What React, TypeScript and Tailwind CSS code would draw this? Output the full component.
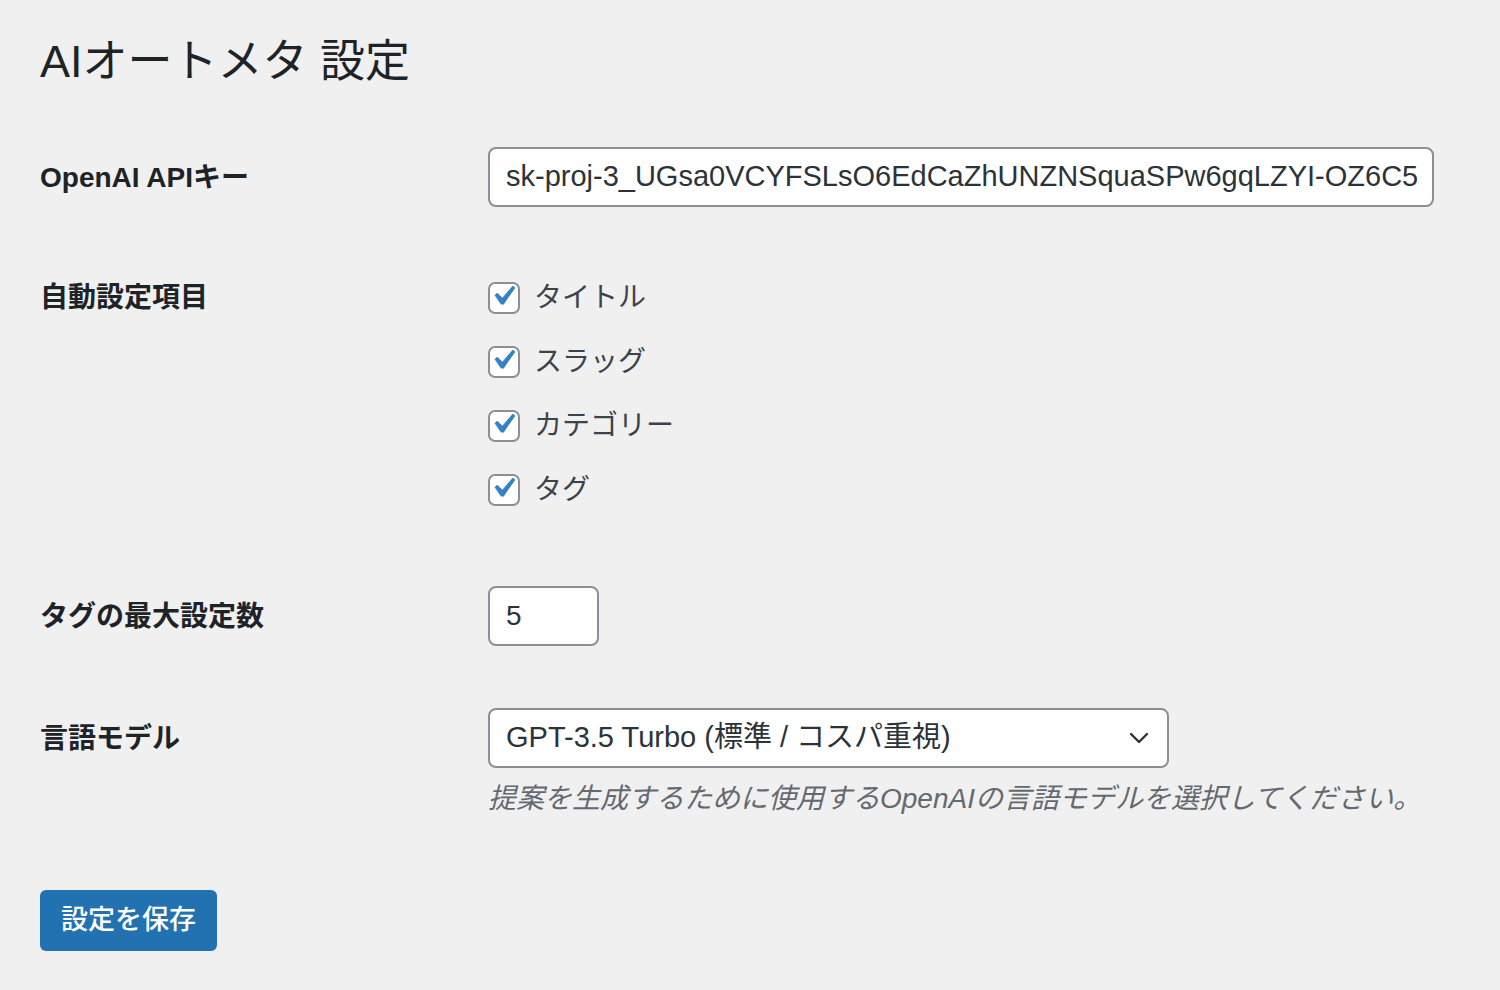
import { ChevronDown } from 'lucide-react'

// ── Settings page (WordPress admin style, 2x) ───────────────

const FONT = '"Liberation Sans", "Noto Sans CJK JP", sans-serif'

const fields = ['タイトル', 'スラッグ', 'カテゴリー', 'タグ']

export default function App() {
  return (
    <div
      className="min-h-[990px] w-full bg-[#f0f0f1] text-[#3c434a] pl-[40px] pr-[66px]"
      style={{ fontFamily: FONT }}
    >
      <h1 className="pt-[32px] h-[92px] text-[45px] leading-[60px] font-normal text-[#1d2327]">
        AIオートメタ 設定
      </h1>

      <div className="mt-[25px] flex flex-col">
        {/* ── API key ─────────────────────────── */}
        <Row label="OpenAI APIキー">
          <div className="h-[60px] w-[946px] rounded-[8px] border-2 border-[#8c8f94] bg-white px-[16px] flex items-center text-[29px] text-[#2c3338] whitespace-nowrap overflow-hidden">
            sk-proj-3_UGsa0VCYFSLsO6EdCaZhUNZNSquaSPw6gqLZYI-OZ6C5
          </div>
        </Row>

        {/* ── Checkboxes ──────────────────────── */}
        <Row label="自動設定項目" tall>
          <div className="flex flex-col gap-[28px] pt-[13px]">
            {fields.map(f => (
              <label key={f} className="flex items-center gap-[14px] h-[36px]">
                <Checkbox />
                <span className="text-[28px] text-[#3c434a]">{f}</span>
              </label>
            ))}
          </div>
        </Row>

        {/* ── Max tags ────────────────────────── */}
        <Row label="タグの最大設定数">
          <div className="h-[60px] w-[111px] rounded-[8px] border-2 border-[#8c8f94] bg-white px-[16px] flex items-center text-[28px] text-[#2c3338]">
            5
          </div>
        </Row>

        {/* ── Model ───────────────────────────── */}
        <div className="mt-[2px]">
          <Row label="言語モデル">
            <div className="h-[60px] w-[681px] rounded-[8px] border-2 border-[#8c8f94] bg-white pl-[16px] pr-[12px] flex items-center justify-between text-[29px] text-[#2c3338]">
              <span>GPT-3.5 Turbo (標準 / コスパ重視)</span>
              <ChevronDown size={32} strokeWidth={1.8} className="text-[#2c3338]" />
            </div>
            <p className="mt-[13px] text-[28px] leading-[36px] italic text-[#646970] whitespace-nowrap">
              提案を生成するために使用するOpenAIの言語モデルを選択してください。
            </p>
          </Row>
        </div>
      </div>

      <div className="mt-[43px]">
        <button className="h-[61px] w-[177px] rounded-[6px] bg-[#2271b1] text-white text-[27px] font-medium flex items-center justify-center">
          設定を保存
        </button>
      </div>
    </div>
  )
}

// ── Sub-components ──────────────────────────────────────────

function Row({
  label,
  tall = false,
  children,
}: {
  label: string
  tall?: boolean
  children: React.ReactNode
}) {
  return (
    <div className="flex">
      <div className="w-[448px] shrink-0 pt-[43px] pr-[20px] text-[28px] leading-[36px] font-bold text-[#1d2327]">
        {label}
      </div>
      <div className={`flex-1 pt-[30px] ${tall ? 'pb-[48px]' : 'pb-[30px]'}`}>{children}</div>
    </div>
  )
}

function Checkbox() {
  return (
    <span className="w-[32px] h-[32px] shrink-0 rounded-[7px] border-2 border-[#8c8f94] bg-white flex items-center justify-center overflow-visible">
      <svg viewBox="0 0 20 20" className="w-[40px] h-[40px] shrink-0 -mt-[4px] -ml-[2px]">
        <path d="M14.83 4.89l1.34.94-5.81 8.38H9.02L5.78 9.67l1.34-1.25 2.57 2.4z" fill="#3582c4" />
      </svg>
    </span>
  )
}
